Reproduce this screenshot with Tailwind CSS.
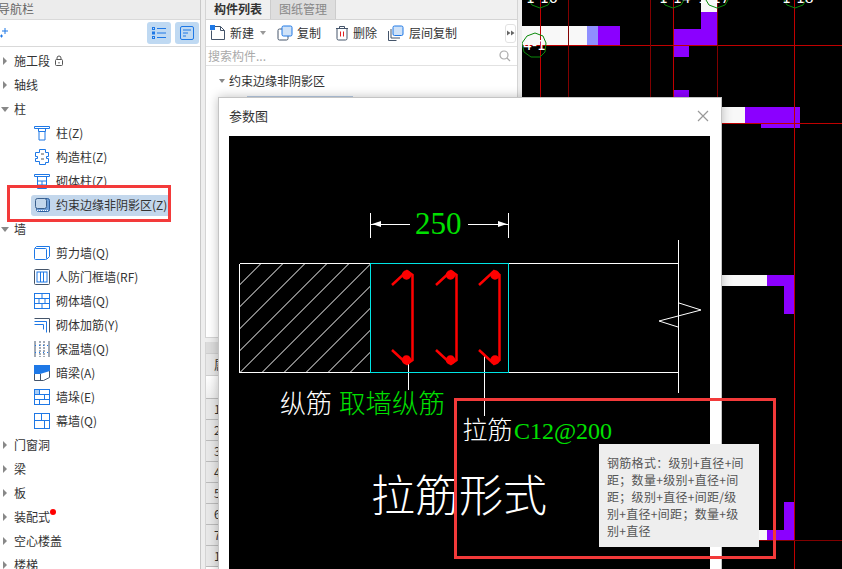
<!DOCTYPE html>
<html lang="zh">
<head>
    <meta charset="UTF-8">
    <title>参数图</title>
    <script src="https://cdn.jsdelivr.net/npm/@tailwindcss/browser@4"></script>
</head>
<body class="font-['Noto_Sans_CJK_SC','Liberation_Sans',sans-serif] text-xs text-[#333]">
<div class="relative flex h-[569px] w-[842px] overflow-hidden bg-black">

    <!-- navigation -->
    <aside class="flex h-full w-[201px] shrink-0 flex-col border-r border-[#c8c8c8] bg-white">
        <div class="h-[19px] shrink-0 overflow-hidden bg-[#ececec] text-[12px] leading-[17px] text-[#666]"><span class="-ml-[2px] block">导航栏</span></div>
        <div class="flex h-[28px] shrink-0 items-center justify-between border-y border-[#d9d9d9] pr-[1px]">
            <svg class="h-3 w-2" viewBox="0 0 8 12" fill="none" stroke="#1e78e6"><path d="M5 1v6M2 4h6M0 9h3M1.500 7.500v3"/></svg>
            <div class="flex gap-1">
                <div class="flex h-[22px] w-6 items-center justify-center rounded-[3px] bg-[#bfd9f2]">
                    <svg class="h-4 w-4" viewBox="0 0 16 16" fill="none" stroke="#1e78e6"><path d="M6 3.500h9M6 8h9M6 12.500h9"/><rect x="1.500" y="2.500" width="2" height="2"/><rect x="1.500" y="7" width="2" height="2"/><rect x="1.500" y="11.500" width="2" height="2"/></svg>
                </div>
                <div class="flex h-[22px] w-6 items-center justify-center rounded-[3px] bg-[#bfd9f2]">
                    <svg class="h-4 w-4" viewBox="0 0 16 16" fill="none" stroke="#1e78e6"><rect x="1.500" y="1.500" width="13" height="13" rx="1.500"/><path d="M4 5h8M4 8h5M4 11h3"/></svg>
                </div>
            </div>
        </div>
        <div class="pt-[2px] leading-6">
            <div class="flex h-6 items-center gap-[7px] pl-[3px]"><i class="h-0 w-0 border-y-4 border-l-4 border-y-transparent border-l-[#888]"></i><span class="flex items-center gap-[3px]">施工段
                <svg class="h-3 w-3" viewBox="0 0 12 12" fill="none" stroke="#555"><rect x="2.500" y="4.500" width="7" height="6" rx="1"/><path d="M4 4.500V3a2 2 0 0 1 4 0v1.500M6 7v1.500"/></svg></span></div>
            <div class="flex h-6 items-center gap-[7px] pl-[3px]"><i class="h-0 w-0 border-y-4 border-l-4 border-y-transparent border-l-[#888]"></i><span>轴线</span></div>
            <div class="flex h-6 items-center gap-[5px] pl-[1px]"><i class="h-0 w-0 border-x-4 border-t-[5px] border-x-transparent border-t-[#888]"></i><span>柱</span></div>

            <div class="flex h-6 items-center gap-[6px] pl-[34px]">
                <svg class="h-4 w-4" viewBox="0 0 16 16" fill="none" stroke="#1e78e6"><path d="M.500 1.500h15v2h-15zM4.500 3.500v3h7v-3M5 6.500v8.500h6V6.500"/></svg><span>柱(Z)</span></div>
            <div class="flex h-6 items-center gap-[6px] pl-[34px]">
                <svg class="h-4 w-4" viewBox="0 0 16 16" fill="none" stroke="#1e78e6"><path d="M5.500.500h6v3h3v4h-2v2h2v4h-3v2h-6v-3h-4v-3h2v-2h-2v-4h4z"/><path stroke="#555" d="M7 5h3M7 10h3"/></svg><span>构造柱(Z)</span></div>
            <div class="flex h-6 items-center gap-[6px] pl-[34px]">
                <svg class="h-4 w-4" viewBox="0 0 16 16" fill="none" stroke="#1e78e6"><path d="M.500 1.500h15v2h-15zM3.500 3.500v12h9v-12M3.500 8h9M3.500 12h9M8 8v4"/></svg><span>砌体柱(Z)</span></div>
            <div class="flex h-6 items-center pl-[31px]">
                <div class="flex h-[21px] w-[137px] items-center gap-[6px] rounded-l-[3px] bg-[#c3d7ec] pl-[3px]">
                    <svg class="h-4 w-4" viewBox="0 0 16 16" fill="none"><rect x="2.500" y="1.500" width="13" height="13" rx="2" fill="#6f9ed6" stroke="#2d5f9e"/><rect x="1.500" y="1.500" width="11" height="10" rx="2" fill="#c3d7ec" stroke="#3a5f8c"/><path stroke="#fff" stroke-dasharray="1 1" d="M3 13.500h12"/></svg><span class="whitespace-nowrap">约束边缘非阴影区(Z)</span></div></div>
            <div class="flex h-6 items-center gap-[5px] pl-[1px]"><i class="h-0 w-0 border-x-4 border-t-[5px] border-x-transparent border-t-[#888]"></i><span>墙</span></div>

            <div class="flex h-6 items-center gap-[6px] pl-[34px]">
                <svg class="h-4 w-4" viewBox="0 0 16 16" fill="none" stroke="#1e78e6"><rect x=".500" y="3.500" width="12" height="11" rx="1"/><path d="M2.500 1.500h13v10l-3 3M.500 3.500l2-2"/></svg><span>剪力墙(Q)</span></div>
            <div class="flex h-6 items-center gap-[6px] pl-[34px]">
                <svg class="h-4 w-4" viewBox="0 0 16 16" fill="none" stroke="#44546a"><rect x=".500" y=".500" width="15" height="15" rx="1"/><rect x="3" y="3" width="10" height="10" stroke="#1e78e6"/><path stroke="#1e78e6" d="M6.500 3v10M9.500 3v10"/></svg><span>人防门框墙(RF)</span></div>
            <div class="flex h-6 items-center gap-[6px] pl-[34px]">
                <svg class="h-4 w-4" viewBox="0 0 16 16" fill="none" stroke="#1e78e6"><rect x=".500" y=".500" width="15" height="15"/><path d="M.500 5.500h15M.500 10.500h15M8 .500v5M5 5.500v5M11 5.500v5M8 10.500v5"/></svg><span>砌体墙(Q)</span></div>
            <div class="flex h-6 items-center gap-[6px] pl-[34px]">
                <svg class="h-4 w-4" viewBox="0 0 16 16" fill="none" stroke="#1e78e6"><path stroke="#44546a" d="M.500 1.500h15v14"/><path d="M.500 4.500h12v11M.500 7.500h9v5"/></svg><span>砌体加筋(Y)</span></div>
            <div class="flex h-6 items-center gap-[6px] pl-[34px]">
                <svg class="h-4 w-4" viewBox="0 0 16 16" fill="none" stroke="#44546a"><path d="M1 0v16M15 0v16"/><path stroke-dasharray="2 1" d="M6 0v16M10 0v16"/><path stroke="#1e78e6" stroke-dasharray="1 3" d="M1 4.500h14M1 11.500h14"/></svg><span>保温墙(Q)</span></div>
            <div class="flex h-6 items-center gap-[6px] pl-[34px]">
                <svg class="h-4 w-4" viewBox="0 0 16 16" fill="none"><path fill="#1e78e6" d="M0 0h16v6L6 9H0z"/><path stroke="#44546a" d="M.500 9v6.500h9l6-3V6M6.500 9v6.500"/></svg><span>暗梁(A)</span></div>
            <div class="flex h-6 items-center gap-[6px] pl-[34px]">
                <svg class="h-4 w-4" viewBox="0 0 16 16" fill="none" stroke="#1e78e6"><rect x="1" y="1" width="5" height="5" fill="#a9cdf5" stroke="none"/><rect x=".500" y=".500" width="15" height="15"/><path d="M.500 5.500h15M.500 10.500h15M5.500 .500v5M10.500 5.500v5M5.500 10.500v5"/></svg><span>墙垛(E)</span></div>
            <div class="flex h-6 items-center gap-[6px] pl-[34px]">
                <svg class="h-4 w-4" viewBox="0 0 16 16" fill="none" stroke="#1e78e6"><rect x=".500" y=".500" width="15" height="15"/><path d="M.500 7.500h15M7.500 .500v7M10.500 7.500v8"/></svg><span>幕墙(Q)</span></div>

            <div class="flex h-6 items-center gap-[7px] pl-[3px]"><i class="h-0 w-0 border-y-4 border-l-4 border-y-transparent border-l-[#888]"></i><span>门窗洞</span></div>
            <div class="flex h-6 items-center gap-[7px] pl-[3px]"><i class="h-0 w-0 border-y-4 border-l-4 border-y-transparent border-l-[#888]"></i><span>梁</span></div>
            <div class="flex h-6 items-center gap-[7px] pl-[3px]"><i class="h-0 w-0 border-y-4 border-l-4 border-y-transparent border-l-[#888]"></i><span>板</span></div>
            <div class="flex h-6 items-center gap-[7px] pl-[3px]"><i class="h-0 w-0 border-y-4 border-l-4 border-y-transparent border-l-[#888]"></i><span class="relative">装配式<i class="absolute -right-[6px] top-[4px] h-[6px] w-[6px] rounded-full bg-[#f00]"></i></span></div>
            <div class="flex h-6 items-center gap-[7px] pl-[3px]"><i class="h-0 w-0 border-y-4 border-l-4 border-y-transparent border-l-[#888]"></i><span>空心楼盖</span></div>
            <div class="flex h-6 items-center gap-[7px] pl-[3px]"><i class="h-0 w-0 border-y-4 border-l-4 border-y-transparent border-l-[#888]"></i><span>楼梯</span></div>
        </div>
    </aside>

    <!-- component list + properties -->
    <div class="flex h-full w-[321px] shrink-0 flex-col bg-[#eeeeee] px-[4px]">
        <div class="flex h-[338px] shrink-0 flex-col border-x border-b border-[#d4d4d4] bg-white">
            <div class="flex h-[20px] shrink-0 border-b border-[#d4d4d4] bg-[#f0f0f0]">
                <div class="w-[65px] border-r border-[#ccc] text-center font-semibold leading-[17px]">构件列表</div>
                <div class="w-[65px] border-r border-[#ccc] bg-[#dedede] text-center leading-[17px] text-[#888]">图纸管理</div>
            </div>
            <div class="flex h-[27px] shrink-0 items-center border-b border-[#e2e2e2] pl-[4px]">
                <svg class="h-4 w-4" viewBox="0 0 16 16" fill="none" stroke="#44546a"><path d="M3.500 1.500h7l4 4v9h-13v-9"/><path d="M10.500 1.500v4h4"/><rect x="0" y="0" width="5" height="5" fill="#1e78e6" stroke="none"/></svg>
                <span class="ml-[4px]">新建</span>
                <i class="ml-[6px] h-0 w-0 border-x-[3px] border-t-4 border-x-transparent border-t-[#999]"></i>
                <svg class="ml-[11px] h-4 w-4" viewBox="0 0 16 16" fill="none"><rect x="1" y="4" width="10" height="11" rx="1.500" fill="#fff" stroke="#44546a"/><rect x="5" y="1" width="10" height="10" rx="1.500" fill="#cfe2f8" stroke="#1e78e6"/></svg>
                <span class="ml-[4px]">复制</span>
                <svg class="ml-[13px] h-4 w-4" viewBox="0 0 16 16" fill="none" stroke="#44546a"><path d="M2 3.500h12M5.500 3.500V1.500h5v2M3 3.500v10a1.500 1.500 0 0 0 1.500 1.500h7a1.500 1.500 0 0 0 1.500-1.500v-10"/><path stroke="#e02020" d="M6.500 6.500v5M9.500 6.500v5"/></svg>
                <span class="ml-[3px]">删除</span>
                <svg class="ml-[11px] h-4 w-4" viewBox="0 0 16 16" fill="none"><path stroke="#44546a" d="M.500 6v9.500h8M3 4v9h9"/><rect x="5" y="1" width="10" height="9.500" rx="1.500" fill="#cfe2f8" stroke="#1e78e6"/></svg>
                <span class="ml-[5px]">层间复制</span>
                <div class="ml-auto mr-[1px] flex h-[19px] w-[11px] items-center justify-center rounded-[3px] border border-[#e2e2e2]">
                    <svg class="h-2 w-2" viewBox="0 0 8 8" fill="#666"><path d="M0 1.500 3.500 4 0 6.500zM4 1.500 7.500 4 4 6.500z"/></svg>
                </div>
            </div>
            <div class="flex h-[19px] shrink-0 items-center justify-between border-b border-[#e2e2e2] pl-[2px] pr-[6px] text-[#aaa]">
                <span>搜索构件...</span>
                <svg class="h-3 w-3" viewBox="0 0 12 12" fill="none" stroke="#aaa" stroke-width="1.200"><circle cx="5" cy="5" r="4"/><path d="m8 8 3 3"/></svg>
            </div>
            <div class="flex h-[30px] items-center gap-[4px] pl-[13px]">
                <i class="h-0 w-0 border-x-[3.500px] border-t-4 border-x-transparent border-t-[#888]"></i><span>约束边缘非阴影区</span></div>
            <div class="ml-[41px] h-[3px] w-[106px] bg-[#b8cce4]"></div>
        </div>
        <div class="mt-[4px] flex-1 border-x border-[#d4d4d4] bg-white">
            <div class="h-[11px] bg-[#dcdcdc]"></div>
            <div class="h-[23px] w-[100px] border-y border-[#cfcfcf] bg-[#e8e8e8] pl-[8px] leading-[21px]">属性名称</div>
            <div class="h-[22px] w-[12px] bg-gradient-to-b from-white to-[#eee]"></div>
            <div class="border-t border-[#bbb]">
                <div class="h-[21px] border-b border-[#bbb] bg-[#e8e8e8] pl-[8px] leading-[20px]">1</div>
                <div class="h-[21px] border-b border-[#bbb] bg-[#e8e8e8] pl-[8px] leading-[20px]">2</div>
                <div class="h-[21px] border-b border-[#bbb] bg-[#e8e8e8] pl-[8px] leading-[20px]">3</div>
                <div class="h-[21px] border-b border-[#bbb] bg-[#e8e8e8] pl-[8px] leading-[20px]">4</div>
                <div class="h-[21px] border-b border-[#bbb] bg-[#e8e8e8] pl-[8px] leading-[20px]">5</div>
                <div class="h-[21px] border-b border-[#bbb] bg-[#e8e8e8] pl-[8px] leading-[20px]">6</div>
                <div class="h-[21px] border-b border-[#bbb] bg-[#e8e8e8] pl-[8px] leading-[20px]">7</div>
                <div class="h-[21px] border-b border-[#bbb] bg-[#e8e8e8] pl-[8px] leading-[20px]">1</div>
            </div>
        </div>
    </div>

    <!-- CAD canvas -->
    <svg class="block shrink-0" width="320" height="569" viewBox="522 0 320 569" fill="none">
        <path fill="#f8f8f8" d="M522 26h65v19h-65zM701 0h16v12h-16zM721 107h24v16h-24zM721 275h46v11h-46zM755 530h12v10h-12z"/>
        <path fill="#8f8fff" d="M587 26h11v19h-11z"/>
        <path fill="#8b00ff" d="M598 26h22v19h-22zM701 12h16v17h-16zM673 29h44v16h-44zM673 45h16v12h-16zM673 90h16v10h-16zM745 107h55v16h-55zM761 123h39v5h-39zM767 275h28v11h-28zM784 286h11v28h-11zM784 502h11v28h-11zM767 530h28v11h-28z"/>
        <g stroke="#c00000" shape-rendering="crispEdges">
            <path d="M540.500 0v100M673.500 0v100M794.500 0v569M522 45.500h320M721 123.500h121"/>
            <path stroke="#800000" d="M568.500 0v100M650.500 0v100M717.500 0v100M755 540.500h87"/>
        </g>
        <g stroke="#0a8a0a">
            <path d="M535 33l8 3 3 7-1 9-5 5h-9l-7-5-2-9 5-7z"/>
            <path d="M529 0l3 5 8 3 8-3 3-5M662 0l3 5 8 3 8-3 3-5M706 0l3 5 8 3 8-3 3-5M784 0l3 5 8 3 8-3 3-5"/>
        </g>
        <g fill="#fff" font-family="'DejaVu Sans'" font-size="14">
            <text x="523" y="50">4-1</text>
            <text x="526" y="3">1-16</text>
            <text x="659" y="3">1-14</text>
            <text x="698" y="3">1-17</text>
            <text x="782" y="3">1-18</text>
        </g>
    </svg>

    <!-- dialog -->
    <div class="absolute left-[218px] top-[97px] h-[490px] w-[504px] border border-[#c4c4c4] bg-white shadow-[0_0_10px_rgba(0,0,0,0.25)]">
        <div class="flex h-[38px] items-center justify-between pb-[2px] pl-[10px] pr-[12px] text-[13px] text-[#333]">
            <span>参数图</span>
            <svg class="h-3 w-3" viewBox="0 0 12 12" fill="none" stroke="#999" stroke-width="1.200"><path d="m1 1 10 10M11 1 1 11"/></svg>
        </div>
        <div class="ml-[10px] h-[433px] w-[481px] bg-black">
            <svg class="block" width="481" height="433" viewBox="229 136 481 433" fill="none">
                <defs><clipPath id="hatch"><rect x="239.500" y="263.500" width="131" height="109"/></clipPath></defs>
                <g stroke="#fff" clip-path="url(#hatch)">
                    <path d="M261 263.500l-109 109M283 263.500l-109 109M305 263.500l-109 109M327 263.500l-109 109M349 263.500l-109 109M371 263.500l-109 109M393 263.500l-109 109M415 263.500l-109 109M437 263.500l-109 109M459 263.500l-109 109"/>
                </g>
                <g stroke="#fff" shape-rendering="crispEdges">
                    <path d="M239.500 263.500h439.500M239.500 372.500h439.500M239.500 263.500v109M678.500 240v153M370.500 213v25M508.500 213v25M370 224.500h40M468 224.500h40M408.500 363v27M484.500 355v61"/>
                </g>
                <path stroke="#fff" d="M679 303 701 310 659 321 678 327"/>
                <path fill="#fff" d="m372 224 9-3v6zm135 0-9-3v6z"/>
                <rect x="370.500" y="263.500" width="138" height="109" stroke="#00e5e5" shape-rendering="crispEdges"/>
                <g stroke="#f00" stroke-width="2.500" fill="#f00">
                    <path fill="none" d="M392 285l15-14 5.500 4v85l-5.500 4-15-14"/>
                    <circle cx="406.500" cy="275" r="3.500"/><circle cx="406.500" cy="360" r="3.500"/>
                    <path fill="none" d="M436 285l15-14 5.500 4v85l-5.500 4-15-14"/>
                    <circle cx="450.500" cy="275" r="3.500"/><circle cx="450.500" cy="360" r="3.500"/>
                    <path fill="none" d="M479 285l15-14 5.500 4v85l-5.500 4-15-14"/>
                    <circle cx="495" cy="275" r="3.500"/><circle cx="495" cy="360" r="3.500"/>
                </g>
                <text x="415" y="234" fill="#00e000" font-family="'Liberation Serif'" font-size="31">250</text>
                <text x="280" y="413" fill="#fff" font-size="26" font-weight="300" font-family="'Noto Sans CJK SC'">纵筋</text>
                <text x="339" y="413" fill="#00e000" font-size="26.500" font-weight="300" font-family="'Noto Sans CJK SC'">取墙纵筋</text>
                <text x="462.500" y="439" fill="#fff" font-size="25" font-weight="300" font-family="'Noto Sans CJK SC'">拉筋</text>
                <text x="514" y="439" fill="#00e000" font-size="24" font-family="'Liberation Serif'">C12@200</text>
                <text x="371" y="512" fill="#fff" font-size="44" font-weight="300" font-family="'Noto Sans CJK SC'">拉筋形式</text>
            </svg>
        </div>
    </div>

    <!-- tooltip -->
    <div class="absolute left-[599px] top-[444px] h-[103px] w-[160px] whitespace-nowrap bg-[#eeeeee] px-2 pt-[10px] text-[12px] leading-[17px] tracking-[0.3px] text-[#555]">钢筋格式：级别+直径+间<br>距；数量+级别+直径+间<br>距；级别+直径+间距/级<br>别+直径+间距；数量+级<br>别+直径</div>

    <!-- annotation boxes -->
    <div class="pointer-events-none absolute left-[7px] top-[185px] h-[37px] w-[164px] border-[3px] border-[#f33a3a]"></div>
    <div class="pointer-events-none absolute left-[454px] top-[398px] h-[161px] w-[322px] border-[3px] border-[#f33a3a]"></div>
</div>
</body>
</html>
